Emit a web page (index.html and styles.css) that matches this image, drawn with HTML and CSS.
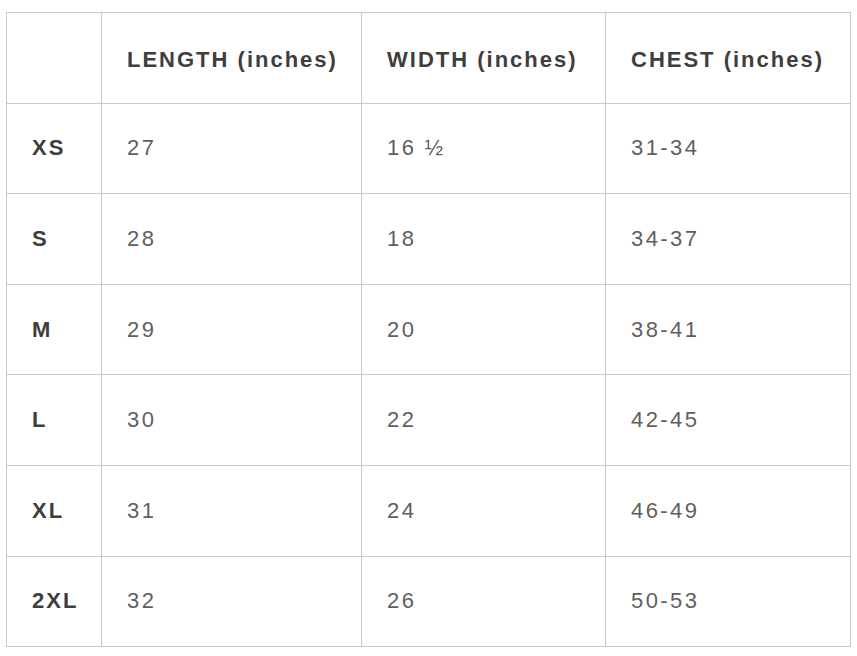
FILE: index.html
```html
<!DOCTYPE html>
<html>
<head>
<meta charset="utf-8">
<link rel="stylesheet" href="styles.css">
</head>
<body>
<table class="sizes">
  <colgroup>
    <col class="c0"><col class="c1"><col class="c2"><col class="c3">
  </colgroup>
  <thead>
    <tr><th></th><th>LENGTH (inches)</th><th>WIDTH (inches)</th><th>CHEST (inches)</th></tr>
  </thead>
  <tbody>
    <tr><th>XS</th><td>27</td><td>16 ½</td><td>31-34</td></tr>
    <tr><th>S</th><td>28</td><td>18</td><td>34-37</td></tr>
    <tr><th>M</th><td>29</td><td>20</td><td>38-41</td></tr>
    <tr><th>L</th><td>30</td><td>22</td><td>42-45</td></tr>
    <tr><th>XL</th><td>31</td><td>24</td><td>46-49</td></tr>
    <tr><th>2XL</th><td>32</td><td>26</td><td>50-53</td></tr>
  </tbody>
</table>
</body>
</html>
```
FILE: styles.css
```css
html, body {
  margin: 0;
  background: #ffffff;
}
body {
  padding: 12px 0 0 6px;
  font-family: "Liberation Sans", Arial, sans-serif;
}
.sizes {
  border-collapse: collapse;
  table-layout: fixed;
  width: 844px;
}
.c0 { width: 95px; }
.c1 { width: 260px; }
.c2 { width: 244px; }
.c3 { width: 245px; }
.sizes th, .sizes td {
  border: 1px solid #c9c9c9;
  height: 90.6px;
  padding: 0 0 0 25px;
  text-align: left;
  font-size: 22px;
  letter-spacing: 2px;
  box-sizing: border-box;
}
.sizes th {
  font-weight: bold;
  color: #3e3e3e;
}
.sizes thead th {
  padding-top: 4px;
}
.sizes td {
  font-weight: normal;
  color: #5f5f5f;
  letter-spacing: 2.4px;
}
```
